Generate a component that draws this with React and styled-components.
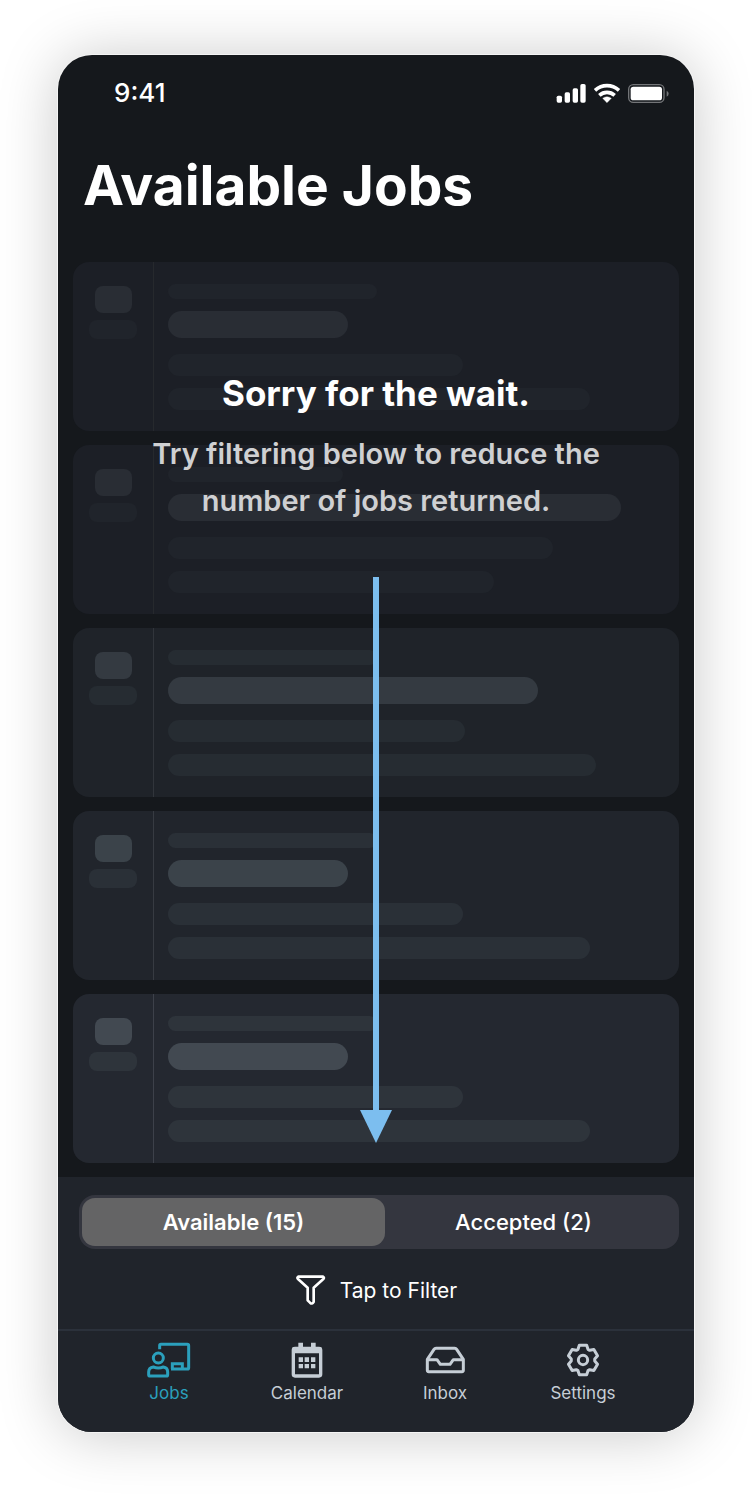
import React from "react";
import styled, { createGlobalStyle } from "styled-components";

const CARDS = [
  { tone: 0, bars: [209, 180, 295, 422] },
  { tone: 0, bars: [175, 453, 385, 326] },
  { tone: 1, bars: [209, 370, 297, 428] },
  { tone: 2, bars: [209, 180, 295, 422] },
  { tone: 3, bars: [209, 180, 295, 422] }
];

// card / line / soft bar / strong bar, fading in towards the bottom
const TONES = [
  { card: "#1c1f26", line: "#26292d", soft: "#20242b", strong: "#292d34" },
  { card: "#1f2329", line: "#31353b", soft: "#262c32", strong: "#343a41" },
  { card: "#21252c", line: "#373b42", soft: "#2a3037", strong: "#3b434a" },
  { card: "#242830", line: "#3d414a", soft: "#2e343b", strong: "#424951" }
];

// outline of a six-toothed gear around 0,0
const gearPath = () => {
  const tooth = [[-15, -32], [-11, -44], [11, -44], [15, -32]];
  const points = [];
  for (let i = 0; i < 6; i++) {
    const a = (i * Math.PI) / 3;
    tooth.forEach(([x, y]) => {
      points.push([
        (x * Math.cos(a) - y * Math.sin(a)).toFixed(1),
        (x * Math.sin(a) + y * Math.cos(a)).toFixed(1)
      ]);
    });
  }
  return `M${points.map(p => p.join(" ")).join("L")}Z`;
};

const SignalIcon = () => (
  <svg width="31" height="21" viewBox="48 39 93 63" fill="#fff">
    <rect x="50" y="77" width="16" height="21" rx="5" />
    <rect x="74" y="67" width="16" height="31" rx="5" />
    <rect x="98" y="55" width="16" height="43" rx="5" />
    <rect x="121" y="42" width="16" height="56" rx="5" />
  </svg>
);

const WifiIcon = () => (
  <svg width="28" height="21" viewBox="159 39 84 63">
    <g fill="none" stroke="#fff" strokeWidth="11">
      <path d="M165 61Q181 47 201 47T237 61" />
      <path d="M178 76Q188 67 201 67T224 76" />
    </g>
    <path
      d="M188 85Q201 75 214 85L201 98Z"
      fill="#fff"
      stroke="#fff"
      strokeWidth="1"
    />
  </svg>
);

const BatteryIcon = () => (
  <svg width="43" height="21" viewBox="264 39 129 63">
    <rect
      x="269"
      y="44"
      width="106"
      height="53"
      rx="14"
      fill="none"
      stroke="#737578"
      strokeWidth="4"
    />
    <rect x="275" y="50" width="94" height="41" rx="8" fill="#fff" />
    <path d="M383 62Q389 65 389 71T383 80Z" fill="#737578" />
  </svg>
);

const FilterIcon = () => (
  <svg width="32" height="32" viewBox="48 45 96 96">
    <path
      d="M58 53H132Q137 56 133 60L104 86V129Q100 137 93 131L86 124V86L57 60Q53 56 58 53Z"
      fill="none"
      stroke="#fff"
      strokeWidth="8"
      strokeLinejoin="round"
    />
  </svg>
);

const JobsIcon = () => (
  <svg width="44" height="36" viewBox="48 38 132 108">
    <g fill="none" stroke="currentColor" strokeWidth="9">
      <path d="M86 60V49Q86 45 90 45H169Q173 45 173 49V115Q173 119 169 119H120" />
      <path d="M124 119V103H154V119" />
      <circle cx="82" cy="86" r="15" />
      <path d="M67 113Q82 119 97 113Q110 115 110 128V136Q110 140 106 140H58Q53 140 53 136V128Q53 115 67 113Z" />
    </g>
  </svg>
);

const CalendarIcon = () => (
  <svg width="34" height="36" viewBox="88 38 102 108" fill="currentColor">
    <rect
      x="98"
      y="57"
      width="82"
      height="83"
      rx="5"
      fill="none"
      stroke="currentColor"
      strokeWidth="10"
    />
    <path d="M96 54H182V72H96ZM113 40H127V56H113ZM151 40H165V56H151Z" />
    <path d="M114 84h13v14h-13zM132 84h13v14h-13zM151 84h13v14h-13z" />
    <path d="M114 104h13v13h-13zM132 104h13v13h-13zM151 104h13v13h-13z" />
  </svg>
);

const InboxIcon = () => (
  <svg width="44" height="36" viewBox="37 38 132 108">
    <g
      fill="none"
      stroke="currentColor"
      strokeWidth="9"
      strokeLinejoin="round"
    >
      <path d="M50 90L70 60Q72 57 76 57H132Q136 57 138 60L158 90V123Q158 127 154 127H54Q50 127 50 123Z" />
      <path d="M50 91H79L89 105H118L128 91H158" />
    </g>
  </svg>
);

const SettingsIcon = () => (
  <svg width="34" height="36" viewBox="-51 -54 102 108">
    <g
      fill="none"
      stroke="currentColor"
      strokeWidth="9"
      strokeLinejoin="round"
    >
      <path d={gearPath()} />
      <circle r="14" />
    </g>
  </svg>
);

const TABS = [
  { label: "Jobs", Icon: JobsIcon, active: true },
  { label: "Calendar", Icon: CalendarIcon },
  { label: "Inbox", Icon: InboxIcon },
  { label: "Settings", Icon: SettingsIcon }
];

const SkeletonCard = ({ tone, bars }) => (
  <Card $tone={tone}>
    <CardSide $tone={tone}>
      <Block $color={tone.strong} $width={37} $height={27} $radius={8} />
      <Block $color={tone.soft} $width={48} $height={19} $radius={8} />
    </CardSide>
    <CardLines>
      <Block $color={tone.soft} $width={bars[0]} $height={15} />
      <Block $color={tone.strong} $width={bars[1]} $height={27} />
      <Block $color={tone.soft} $width={bars[2]} $height={22} $spaced />
      <Block $color={tone.soft} $width={bars[3]} $height={22} />
    </CardLines>
  </Card>
);

class App extends React.Component {
  state = { segment: "available" };

  render() {
    const { segment } = this.state;
    return (
      <Page>
        <GlobalStyle />
        <Phone>
          <StatusBar>
            <Time>9:41</Time>
            <StatusIcons>
              <SignalIcon />
              <WifiIcon />
              <BatteryIcon />
            </StatusIcons>
          </StatusBar>
          <Title>Available Jobs</Title>
          <Jobs>
            {CARDS.map((card, i) => (
              <SkeletonCard key={i} tone={TONES[card.tone]} bars={card.bars} />
            ))}
            <Notice>
              <NoticeTitle>Sorry for the wait.</NoticeTitle>
              <NoticeText>
                Try filtering below to reduce the number of jobs returned.
              </NoticeText>
              <ArrowShaft />
              <ArrowHead />
            </Notice>
          </Jobs>
          <Controls>
            <Segments>
              <Segment
                $active={segment === "available"}
                onClick={() => this.setState({ segment: "available" })}
              >
                Available (15)
              </Segment>
              <Segment
                $active={segment === "accepted"}
                onClick={() => this.setState({ segment: "accepted" })}
              >
                Accepted (2)
              </Segment>
            </Segments>
            <FilterButton>
              <FilterIcon />
              Tap to Filter
            </FilterButton>
          </Controls>
          <TabBar>
            {TABS.map(({ label, Icon, active }) => (
              <Tab key={label} href="#" $active={active}>
                <Icon />
                {label}
              </Tab>
            ))}
          </TabBar>
        </Phone>
      </Page>
    );
  }
}

const GlobalStyle = createGlobalStyle`
  * {
    box-sizing: border-box;
  }

  body {
    background: #fff;
    font-family: Inter, "Liberation Sans", sans-serif;
    margin: 0;
  }

  button {
    background: none;
    border: 0;
    color: inherit;
    cursor: pointer;
    font-family: inherit;
    padding: 0;
  }

  svg {
    display: block;
    flex-shrink: 0;
  }
`;

const Page = styled.div`
  overflow: hidden;
  padding: 55px 58px 62px;
`;

const Phone = styled.main`
  background: #15181c;
  border-radius: 34px;
  box-shadow: 0 0 0 1px #f4f4f4, 0 2px 60px rgba(0, 0, 0, 0.22);
  color: #fff;
  overflow: hidden;
`;

const StatusBar = styled.div`
  align-items: center;
  display: flex;
  justify-content: space-between;
  padding: 23px 24px 0 56px;
`;

const Time = styled.div`
  font-size: 26px;
  font-weight: 500;
  line-height: 30px;
`;

const StatusIcons = styled.div`
  display: flex;
  gap: 6px;
`;

const Title = styled.h1`
  font-size: 55px;
  font-weight: 700;
  line-height: 68px;
  margin: 0;
  padding: 43px 25px;
`;

const Jobs = styled.section`
  display: flex;
  flex-direction: column;
  gap: 14px;
  padding: 0 15px 14px;
  position: relative;
`;

const Card = styled.div`
  background: ${props => props.$tone.card};
  border-radius: 16px;
  display: grid;
  grid-template-columns: 81px 1fr;
  height: 169px;
  overflow: hidden;
`;

const CardSide = styled.div`
  align-items: center;
  border-right: 1px solid ${props => props.$tone.line};
  display: flex;
  flex-direction: column;
  gap: 7px;
  padding-top: 24px;
`;

const CardLines = styled.div`
  display: flex;
  flex-direction: column;
  gap: 12px;
  padding: 22px 14px 0;
`;

const Block = styled.div`
  background: ${props => props.$color};
  border-radius: ${props => props.$radius || 14}px;
  height: ${props => props.$height}px;
  margin-top: ${props => (props.$spaced ? 4 : 0)}px;
  max-width: 100%;
  width: ${props => props.$width}px;
`;

/* sits over the skeleton cards and points at the filter */
const Notice = styled.div`
  align-items: center;
  display: flex;
  flex-direction: column;
  inset: 0;
  padding: 109px 80px 34px;
  position: absolute;
  text-align: center;
`;

const NoticeTitle = styled.h2`
  font-size: 35px;
  font-weight: 700;
  line-height: 44px;
  margin: 0 0 15px;
`;

const NoticeText = styled.p`
  color: #cfd0d2;
  font-size: 29px;
  font-weight: 600;
  line-height: 47px;
  margin: 0 0 53px;
`;

const ArrowShaft = styled.div`
  background: #7cbeef;
  flex: 1;
  width: 6px;
`;

const ArrowHead = styled.div`
  background: #7cbeef;
  clip-path: polygon(0 0, 100% 0, 50% 100%);
  height: 33px;
  width: 32px;
`;

const Controls = styled.div`
  background: #20242b;
  display: flex;
  flex-direction: column;
  gap: 25px;
  padding: 18px 0 23px;
`;

const Segments = styled.div`
  background: #34363f;
  border-radius: 16px;
  display: grid;
  grid-template-columns: 51% 1fr;
  height: 54px;
  margin: 0 15px 0 21px;
  padding: 3px;
`;

const Segment = styled.button`
  background: ${props => (props.$active ? "#646465" : "transparent")};
  border-radius: 13px;
  font-size: 22px;
  font-weight: ${props => (props.$active ? 600 : 500)};

  &:last-child {
    padding-right: 14px;
  }
`;

const FilterButton = styled.button`
  align-items: center;
  align-self: center;
  display: flex;
  font-size: 21px;
  gap: 13px;
  height: 32px;
`;

const TabBar = styled.nav`
  background: #20242b;
  border-top: 2px solid #2b313b;
  display: flex;
  padding: 11px 42px 29px;
`;

const Tab = styled.a`
  align-items: center;
  color: ${props => (props.$active ? "#2ba0bd" : "#c6ced6")};
  display: flex;
  flex: 1;
  flex-direction: column;
  font-size: 17px;
  gap: 5px;
  line-height: 20px;
  text-decoration: none;
`;

export default App;
